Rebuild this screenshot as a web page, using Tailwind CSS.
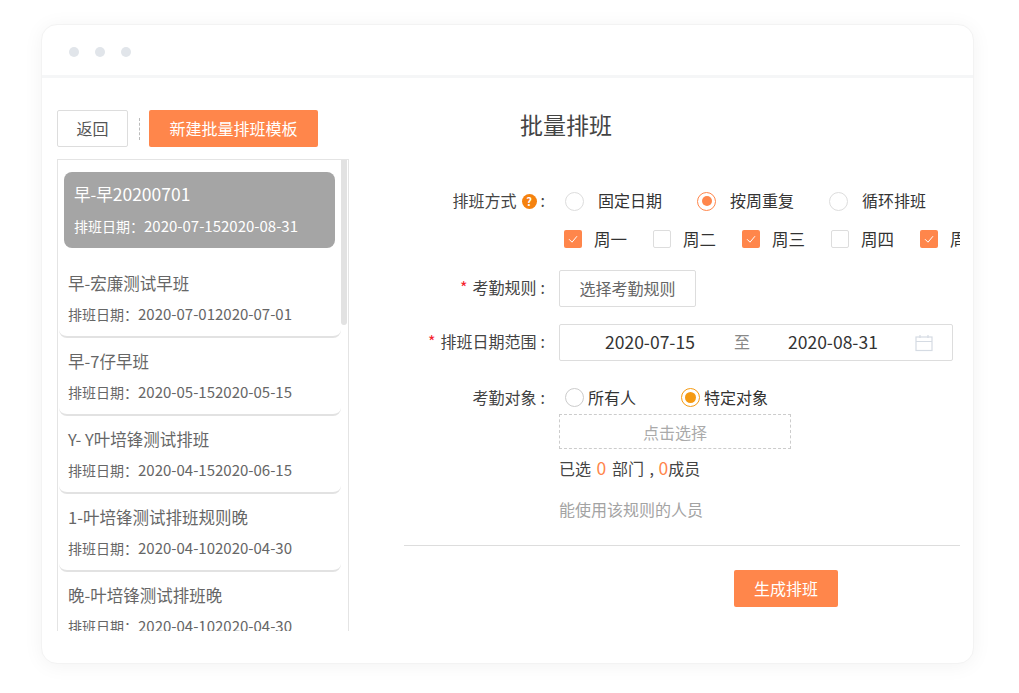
<!doctype html>
<html>
  <head>
    <meta charset="UTF-8" />
    <script src="https://cdn.jsdelivr.net/npm/@tailwindcss/browser@4"></script>
    <title>批量排班</title>
  </head>
  <body class="bg-white font-['Noto_Sans_CJK_SC','Noto_Sans',sans-serif] text-[#333] overflow-hidden">
    <div class="w-[1019px] h-[693px] pt-[24px] pl-[41px]">
      <div class="w-[933px] h-[640px] bg-white border border-[#f3f3f3] rounded-[16px] shadow-[0_2px_20px_rgba(0,0,0,0.05)] overflow-hidden">
        <!-- window bar -->
        <div class="h-[46px] pt-[4px] border-b-[3px] border-[#f5f6f7] flex items-center gap-[16px] pl-[27px] box-content">
          <span class="w-[10px] h-[10px] rounded-full bg-[#e1e5ea]"></span>
          <span class="w-[10px] h-[10px] rounded-full bg-[#e1e5ea]"></span>
          <span class="w-[10px] h-[10px] rounded-full bg-[#e1e5ea]"></span>
        </div>

        <div class="flex ml-[1px]">
          <!-- left column -->
          <div class="w-[361px] pl-[14px] pt-[32px] shrink-0">
            <div class="flex items-center">
              <button class="w-[71px] h-[37px] pb-[2px] border border-[#ddd] rounded-[2px] text-[16px] text-[#555] bg-white">返回</button>
              <span class="h-[22px] ml-[11px] mr-[9px] border-l border-dashed border-[#bbb]"></span>
              <button class="w-[169px] h-[37px] pb-[2px] rounded-[2px] bg-[#ff864b] text-white text-[16px]">新建批量排班模板</button>
            </div>

            <div class="relative mt-[12px] w-[292px] h-[472px] border border-[#e4e4e4] border-b-0 overflow-hidden">
              <div class="absolute right-[1px] top-0 w-[6px] h-[165px] bg-[#e2e2e2] rounded-b-[3px]"></div>
              <div class="pt-[12px]">
                <div class="mx-[6px] w-[271px] h-[76px] rounded-[8px] bg-[#a5a5a5] text-white pl-[10px] pt-[9px]">
                  <div class="text-[16.5px] leading-[26px]">早-早<span class="text-[17.5px]">20200701</span></div>
                  <div class="text-[14px] leading-[20px] mt-[9px]">排班日期：<span class="text-[15px]">2020-07-152020-08-31</span></div>
                </div>
                <div class="mt-[12px] ml-[1px] w-[282px] h-[78px] rounded-[8px] border-b-2 border-[#e2e2e2] pl-[9px] pt-[10px] text-[#666]">
                  <div class="text-[16.5px] leading-[26px]">早-宏廉测试早班</div>
                  <div class="text-[14px] leading-[20px] mt-[8px]">排班日期：<span class="text-[15px]">2020-07-012020-07-01</span></div>
                </div>
                <div class="ml-[1px] w-[282px] h-[78px] rounded-[8px] border-b-2 border-[#e2e2e2] pl-[9px] pt-[10px] text-[#666]">
                  <div class="text-[16.5px] leading-[26px]">早-7仔早班</div>
                  <div class="text-[14px] leading-[20px] mt-[8px]">排班日期：<span class="text-[15px]">2020-05-152020-05-15</span></div>
                </div>
                <div class="ml-[1px] w-[282px] h-[78px] rounded-[8px] border-b-2 border-[#e2e2e2] pl-[9px] pt-[10px] text-[#666]">
                  <div class="text-[16.5px] leading-[26px]">Y- Y叶培锋测试排班</div>
                  <div class="text-[14px] leading-[20px] mt-[8px]">排班日期：<span class="text-[15px]">2020-04-152020-06-15</span></div>
                </div>
                <div class="ml-[1px] w-[282px] h-[78px] rounded-[8px] border-b-2 border-[#e2e2e2] pl-[9px] pt-[10px] text-[#666]">
                  <div class="text-[16.5px] leading-[26px]">1-叶培锋测试排班规则晚</div>
                  <div class="text-[14px] leading-[20px] mt-[8px]">排班日期：<span class="text-[15px]">2020-04-102020-04-30</span></div>
                </div>
                <div class="ml-[1px] w-[282px] h-[78px] pl-[9px] pt-[10px] text-[#666]">
                  <div class="text-[16.5px] leading-[26px]">晚-叶培锋测试排班晚</div>
                  <div class="text-[14px] leading-[20px] mt-[8px]">排班日期：<span class="text-[15px]">2020-04-102020-04-30</span></div>
                </div>
              </div>
            </div>
          </div>

          <!-- right column -->
          <div class="w-[556px] overflow-hidden">
            <h1 class="ml-[116px] mt-[30px] text-[23px] leading-[32px] text-[#444] font-normal">批量排班</h1>

            <div class="mt-[47px] flex items-center h-[28px] text-[16px]">
              <div class="w-[141px] flex justify-end items-center text-[#444] whitespace-nowrap"><span class="pb-[2px]">排班方式</span>
                <span class="ml-[5px] w-[15px] h-[15px] rounded-full bg-[#f5820f] text-white text-[11px] font-bold flex items-center justify-center">?</span>
                <span class="ml-[4px] pb-[2px]">:</span>
              </div>
              <div class="ml-[20px] flex items-center">
                <span class="w-[19px] h-[19px] rounded-full border border-[#ddd]"></span>
                <span class="ml-[14px] w-[99px] pb-[2px]">固定日期</span>
                <span class="w-[19px] h-[19px] rounded-full border border-[#ff864b] flex items-center justify-center"><span class="w-[10px] h-[10px] rounded-full bg-[#ff864b]"></span></span>
                <span class="ml-[14px] w-[99px] pb-[2px]">按周重复</span>
                <span class="w-[19px] h-[19px] rounded-full border border-[#ddd]"></span>
                <span class="ml-[14px] pb-[2px]">循环排班</span>
              </div>
            </div>

            <div class="mt-[10px] ml-[160px] flex items-center h-[28px] text-[16.5px] whitespace-nowrap">
              <span class="w-[18px] h-[18px] rounded-[2px] bg-[#ff864b] flex items-center justify-center shrink-0"><svg width="12" height="12" viewBox="0 0 12 12" fill="none" stroke="#fff" stroke-width="1"><path d="M2 6.2l3 3 5-6"/></svg></span>
              <span class="ml-[12px] w-[59px] shrink-0">周一</span>
              <span class="w-[18px] h-[18px] rounded-[2px] border border-[#ddd] shrink-0"></span>
              <span class="ml-[12px] w-[59px] shrink-0">周二</span>
              <span class="w-[18px] h-[18px] rounded-[2px] bg-[#ff864b] flex items-center justify-center shrink-0"><svg width="12" height="12" viewBox="0 0 12 12" fill="none" stroke="#fff" stroke-width="1"><path d="M2 6.2l3 3 5-6"/></svg></span>
              <span class="ml-[12px] w-[59px] shrink-0">周三</span>
              <span class="w-[18px] h-[18px] rounded-[2px] border border-[#ddd] shrink-0"></span>
              <span class="ml-[12px] w-[59px] shrink-0">周四</span>
              <span class="w-[18px] h-[18px] rounded-[2px] bg-[#ff864b] flex items-center justify-center shrink-0"><svg width="12" height="12" viewBox="0 0 12 12" fill="none" stroke="#fff" stroke-width="1"><path d="M2 6.2l3 3 5-6"/></svg></span>
              <span class="ml-[12px] w-[59px] shrink-0">周五</span>
            </div>

            <div class="mt-[17px] flex items-center h-[37px] text-[16px]">
              <div class="w-[141px] pb-[3px] text-right text-[#444] whitespace-nowrap"><span class="text-[#f5222d] mr-[5px]">*</span>考勤规则<span class="ml-[4px]">:</span></div>
              <button class="ml-[14px] w-[137px] h-[37px] pb-[2px] border border-[#ddd] rounded-[2px] text-[#666]">选择考勤规则</button>
            </div>

            <div class="mt-[17px] flex items-center h-[37px] text-[16px]">
              <div class="w-[141px] pb-[3px] text-right text-[#444] whitespace-nowrap"><span class="text-[#f5222d] mr-[5px]">*</span>排班日期范围<span class="ml-[4px]">:</span></div>
              <div class="ml-[14px] w-[394px] h-[37px] border border-[#ddd] rounded-[2px] flex items-center">
                <span class="ml-[45px] w-[129px] text-[#333] text-[17.5px]">2020-07-15</span>
                <span class="text-[#888] pb-[3px]">至</span>
                <span class="ml-[38px] w-[127px] text-[#333] text-[17.5px]">2020-08-31</span>
                <svg width="18" height="18" viewBox="0 0 18 18" fill="none" stroke="#d5dbe3" stroke-width="1.2"><rect x="1" y="3" width="16" height="13.5"/><path d="M1 7.5h16M5 1v3M13 1v3"/></svg>
              </div>
            </div>

            <div class="mt-[22px] flex items-center h-[28px] text-[16px]">
              <div class="w-[141px] text-right text-[#444] whitespace-nowrap">考勤对象<span class="ml-[4px]">:</span></div>
              <div class="ml-[20px] flex items-center">
                <span class="w-[19px] h-[19px] rounded-full border border-[#ccc]"></span>
                <span class="ml-[4px] w-[93px]">所有人</span>
                <span class="w-[19px] h-[19px] rounded-full border border-[#f59a12] flex items-center justify-center"><span class="w-[11px] h-[11px] rounded-full bg-[#f59a12]"></span></span>
                <span class="ml-[4px]">特定对象</span>
              </div>
            </div>

            <div class="ml-[155px] mt-[3px] w-[232px] h-[35px] border border-dashed border-[#ccc] text-[16px] text-[#aaa] flex items-center justify-center">点击选择</div>
            <div class="ml-[155px] mt-[7px] text-[16px] leading-[24px] text-[#444]">已选 <span class="text-[#ff864b] text-[17.5px] mx-[2px]">0</span> 部门 <span class="ml-[2px]">,</span> <span class="text-[#ff864b] text-[17.5px] ml-[1px]">0</span>成员</div>
            <div class="ml-[155px] mt-[17px] text-[16px] leading-[24px] text-[#a3a3a3]">能使用该规则的人员</div>

            <div class="mt-[24px] border-t border-[#ddd]"></div>
            <button class="block ml-[330px] mt-[24px] w-[104px] h-[37px] pb-[2px] rounded-[2px] bg-[#ff864b] text-white text-[16px]">生成排班</button>
          </div>
        </div>
      </div>
    </div>
  </body>
</html>
